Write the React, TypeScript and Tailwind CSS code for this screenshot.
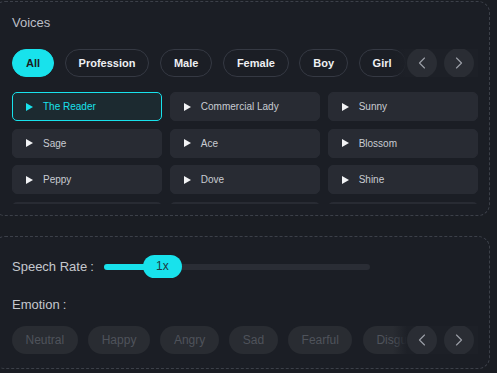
import React from 'react';
import { ChevronLeft, ChevronRight } from 'lucide-react';

const voiceTags = ['All', 'Profession', 'Male', 'Female', 'Boy', 'Girl'];

const voices = [
  'The Reader', 'Commercial Lady', 'Sunny',
  'Sage', 'Ace', 'Blossom',
  'Peppy', 'Dove', 'Shine',
];

const emotions = ['Neutral', 'Happy', 'Angry', 'Sad', 'Fearful', 'Disgusted'];

const PlayIcon: React.FC<{ className?: string }> = ({ className }) => (
  <svg width="7" height="8" viewBox="0 0 7 8" className={className}>
    <path d="M0 0 L7 4 L0 8 Z" fill="currentColor" />
  </svg>
);

const ArrowButtons: React.FC = () => (
  <div className="absolute right-0 top-0 bottom-0 flex items-center gap-[7px] pl-[14px] pr-[4px] bg-[linear-gradient(to_right,rgba(29,32,39,0)_0px,#1d2027_14px)]">
    <button className="w-[30px] h-[30px] rounded-full bg-[#2a2d34] flex items-center justify-center text-[#9a9ea6]">
      <ChevronLeft size={20} strokeWidth={1.4} />
    </button>
    <button className="w-[30px] h-[30px] rounded-full bg-[#2a2d34] flex items-center justify-center text-[#9a9ea6]">
      <ChevronRight size={20} strokeWidth={1.4} />
    </button>
  </div>
);

const VoicesPanel: React.FC = () => (
  <section className="-ml-[7px] w-[497px] rounded-xl border border-dashed border-[#3c4049] bg-[#1b1e25] pl-[18px] pr-[11px] pt-[12px] pb-[11px]">
    <h2 className="text-[13px] leading-[18px] text-[#bcbfc6]">Voices</h2>
    <div className="relative mt-[17px] h-[28px] overflow-hidden">
      <div className="flex gap-[10.5px]">
        {voiceTags.map((t, i) => (
          <button
            key={t}
            className={
              i === 0
                ? 'h-[28px] shrink-0 rounded-full border border-[#18e2ec] bg-[#18e2ec] px-[13px] text-[11px] font-bold text-[#1a1d23]'
                : 'h-[28px] shrink-0 rounded-full border border-[#353943] px-[13px] text-[11px] font-bold text-[#eef0f3]'
            }
          >
            {t}
          </button>
        ))}
      </div>
      <ArrowButtons />
    </div>
    <div className="mt-[15px] h-[112px] overflow-hidden">
      <div className="grid grid-cols-3 gap-[7.5px]">
        {voices.map((v, i) => (
          <div
            key={v}
            className={
              i === 0
                ? 'flex h-[29px] items-center rounded-[5px] border border-[#18e2ec] bg-[#1c2a30] pl-[13px] text-[10px] text-[#18e2ec]'
                : 'flex h-[29px] items-center rounded-[5px] border border-[#282b33] bg-[#282b33] pl-[13px] text-[10px] text-[#c9ccd2]'
            }
          >
            <PlayIcon className={i === 0 ? 'text-[#18e2ec]' : 'text-[#f2f3f5]'} />
            <span className="ml-[10px]">{v}</span>
          </div>
        ))}
        {[0, 1, 2].map((k) => (
          <div key={k} className="h-[29px] rounded-[5px] bg-[#282b33]" />
        ))}
      </div>
    </div>
  </section>
);

const SettingsPanel: React.FC = () => (
  <section className="-ml-[7px] mt-[20px] w-[497px] rounded-xl border border-dashed border-[#3c4049] bg-[#1b1e25] pl-[18px] pr-[11px] pt-[18px] pb-[14px]">
    <div className="flex h-[23px] items-center">
      <span className="text-[13px] text-[#c5c8ce]">
        Speech Rate<span className="ml-[3px]">:</span>
      </span>
      <div className="relative ml-[10px] h-[6px] w-[266px] rounded-full bg-[#2a2d35]">
        <div className="h-[6px] w-[50px] rounded-full bg-[#18e2ec]" />
        <div className="absolute left-[39px] top-[-9px] flex h-[23px] w-[39px] items-center justify-center rounded-full bg-[#18e2ec] text-[12px] text-[#1f3a40]">
          1x
        </div>
      </div>
    </div>
    <div className="mt-[18px] text-[13px] leading-[18px] text-[#c5c8ce]">
      Emotion<span className="ml-[3px]">:</span>
    </div>
    <div className="relative mt-[12px] h-[28px] overflow-hidden">
      <div className="flex gap-[10.5px]">
        {emotions.map((e) => (
          <span
            key={e}
            className="flex h-[28px] shrink-0 items-center rounded-full bg-[#292c32] px-[13.5px] text-[12px] text-[#4f535b]"
          >
            {e}
          </span>
        ))}
      </div>
      <ArrowButtons />
    </div>
  </section>
);

export default function App() {
  return (
    <div className="h-[373px] w-[497px] overflow-hidden bg-[#1a1d23] pt-[1px] font-['Liberation_Sans',Arial,sans-serif]">
      <VoicesPanel />
      <SettingsPanel />
    </div>
  );
}
